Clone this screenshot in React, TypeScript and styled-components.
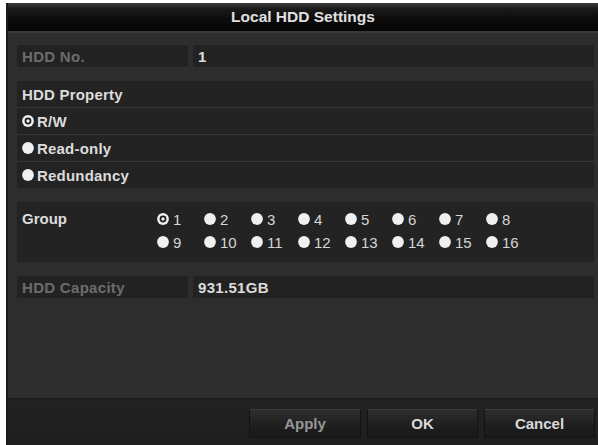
import React from "react";
import styled, { createGlobalStyle } from "styled-components";

const GlobalStyle = createGlobalStyle`
  html, body {
    margin: 0;
    padding: 0;
    background: #ffffff;
    width: 598px;
    height: 445px;
    overflow: hidden;
  }
  body {
    font-family: "Liberation Sans", Arial, sans-serif;
  }
`;

const Dialog = styled.div`
  margin: 3px 0 0 6px;
  width: 592px;
  height: 442px;
  box-sizing: border-box;
  border-left: 2px solid #1b1b1b;
  background: #2d2d2d;
  display: flex;
  flex-direction: column;
`;

const TitleBar = styled.div`
  height: 28px;
  flex: none;
  display: flex;
  align-items: center;
  justify-content: center;
  background: linear-gradient(#3a3a3a 0px, #1a1a1a 6px, #0c0c0c 16px, #050505 100%);
  border-bottom: 2px solid #3a3a3a;
  color: #e0e0e0;
  font-size: 15.5px;
  font-weight: bold;
`;

const Content = styled.div`
  flex: 1;
  display: flex;
  flex-direction: column;
  gap: 14px;
  padding: 12px 4px 0 9px;
`;

const FieldRow = styled.div`
  display: grid;
  grid-template-columns: 171px 1fr;
  gap: 5px;
  height: 22px;
`;

const Cell = styled.div<{ $dim?: boolean }>`
  background: #222222;
  display: flex;
  align-items: center;
  padding-left: 5px;
  font-size: 15px;
  font-weight: bold;
  letter-spacing: 0.3px;
  color: ${p => (p.$dim ? "#6c6c6c" : "#dcdcdc")};
`;

const Section = styled.div`
  background: #363636;
  display: flex;
  flex-direction: column;
  gap: 1px;
`;

const SectionRow = styled.div`
  height: 26px;
  background: #232323;
  display: flex;
  align-items: center;
  gap: 3px;
  padding-left: 5px;
  font-size: 15px;
  font-weight: bold;
  letter-spacing: 0.2px;
  color: #dcdcdc;
`;

const GroupBox = styled.div`
  height: 60px;
  box-sizing: border-box;
  background: #232323;
  display: flex;
  padding: 7px 0 0 5px;
`;

const GroupLabel = styled.div`
  width: 135px;
  font-size: 15px;
  font-weight: bold;
  color: #dcdcdc;
  line-height: 20px;
`;

const GroupGrid = styled.div`
  display: grid;
  grid-template-columns: repeat(8, 47px);
  grid-auto-rows: 23px;
`;

const GroupItem = styled.div`
  display: flex;
  align-items: center;
  gap: 4px;
  height: 20px;
  font-size: 15px;
  color: #d6d6d6;
`;

const BottomBar = styled.div`
  height: 47px;
  flex: none;
  box-sizing: border-box;
  background: linear-gradient(#1a1a1a 0px, #222222 3px, #1e1e1e 100%);
  display: flex;
  justify-content: flex-end;
  align-items: flex-start;
  gap: 6px;
  padding: 11px 3px 0 0;
`;

const Button = styled.div<{ $width: number; $dim?: boolean }>`
  width: ${p => p.$width}px;
  height: 29px;
  box-sizing: border-box;
  border: 1px solid #121212;
  border-top-color: #3a3a3a;
  background: linear-gradient(#2e2e2e, #1f1f1f 55%, #181818);
  display: flex;
  align-items: center;
  justify-content: center;
  font-size: 15px;
  font-weight: bold;
  color: ${p => (p.$dim ? "#979797" : "#dadada")};
`;

const Radio: React.FC<{ checked?: boolean; size?: number }> = ({ checked, size = 12 }) => (
  <svg width={size} height={size} viewBox="0 0 12 12" style={{ flex: "none" }}>
    <circle cx="6" cy="6" r="5.9" fill="#f0f0f0" />
    {checked && (
      <>
        <circle cx="6" cy="6" r="3.4" fill="#1e1e1e" />
        <circle cx="6" cy="6" r="1.7" fill="#f0f0f0" />
      </>
    )}
  </svg>
);

const properties = ["R/W", "Read-only", "Redundancy"];
const groups = Array.from({ length: 16 }, (_, i) => i + 1);

export default function App() {
  return (
    <>
      <GlobalStyle />
      <Dialog>
        <TitleBar>Local HDD Settings</TitleBar>
        <Content>
          <FieldRow>
            <Cell $dim>HDD No.</Cell>
            <Cell>1</Cell>
          </FieldRow>
          <Section>
            <SectionRow>HDD Property</SectionRow>
            {properties.map((p, i) => (
              <SectionRow key={p}>
                <Radio checked={i === 0} />
                {p}
              </SectionRow>
            ))}
          </Section>
          <GroupBox>
            <GroupLabel>Group</GroupLabel>
            <GroupGrid>
              {groups.map(g => (
                <GroupItem key={g}>
                  <Radio checked={g === 1} />
                  {g}
                </GroupItem>
              ))}
            </GroupGrid>
          </GroupBox>
          <FieldRow>
            <Cell $dim>HDD Capacity</Cell>
            <Cell>931.51GB</Cell>
          </FieldRow>
        </Content>
        <BottomBar>
          <Button $width={112} $dim>Apply</Button>
          <Button $width={111}>OK</Button>
          <Button $width={111}>Cancel</Button>
        </BottomBar>
      </Dialog>
    </>
  );
}
